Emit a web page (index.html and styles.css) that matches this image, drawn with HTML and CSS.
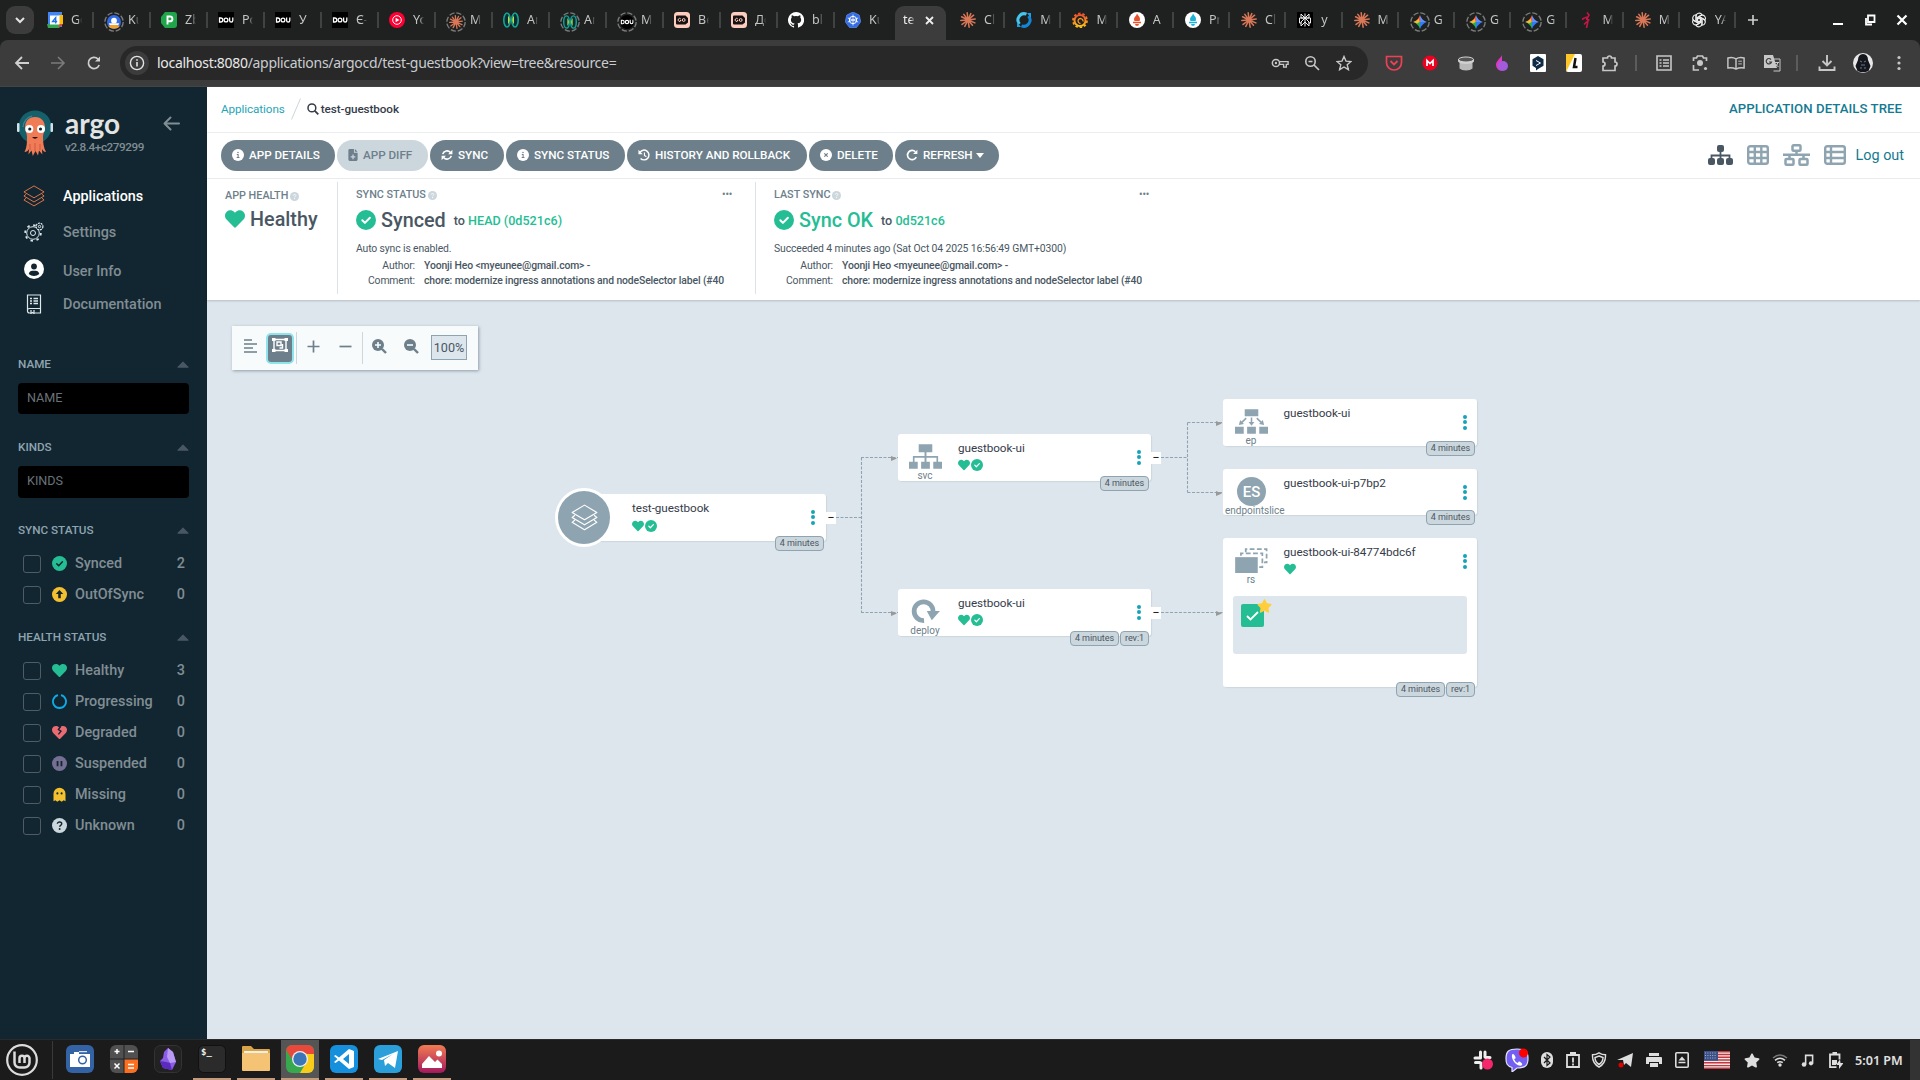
FILE: index.html
```html
<!DOCTYPE html>
<html lang="en">
<head>
<meta charset="utf-8">
<title>test-guestbook - Application Details Tree</title>
<link rel="stylesheet" href="styles.css">
</head>
<body>
<svg class="sprite" aria-hidden="true">
  <symbol id="heart" viewBox="0 0 512 512"><path fill="currentColor" d="M462.3 62.6C407.5 15.9 326 24.3 275.7 76.2L256 96.5l-19.7-20.3C186.1 24.3 104.5 15.9 49.7 62.6c-62.8 53.6-66.1 149.8-9.9 207.9l193.5 199.8c12.5 12.9 32.8 12.9 45.3 0l193.5-199.8c56.3-58.1 53-154.3-9.8-207.9z"/></symbol>
  <symbol id="check" viewBox="0 0 20 20"><circle cx="10" cy="10" r="10" fill="currentColor"/><path d="M6.300 10.300l2.600 2.600 5-5.200" fill="none" stroke="var(--cut,#fff)" stroke-width="2" stroke-linecap="round" stroke-linejoin="round"/></symbol>
  <symbol id="star" viewBox="0 0 576 512"><path fill="currentColor" d="M259.3 17.8L194 150.2 47.9 171.5c-26.2 3.8-36.7 36.1-17.7 54.6l105.7 103-25 145.5c-4.5 26.3 23.2 46 46.4 33.7L288 439.6l130.7 68.7c23.2 12.2 50.9-7.4 46.4-33.7l-25-145.5 105.7-103c19-18.5 8.5-50.8-17.7-54.6L382 150.2 316.7 17.8c-11.7-23.6-45.6-23.9-57.4 0z"/></symbol>
  <symbol id="info" viewBox="0 0 20 20"><circle cx="10" cy="10" r="10" fill="currentColor"/><path d="M8 9h2.2v5M7.8 14.2h4.6" fill="none" stroke="var(--cut,#6d7f8b)" stroke-width="1.7"/><circle cx="10" cy="5.8" r="1.3" fill="var(--cut,#6d7f8b)"/></symbol>
  <symbol id="help" viewBox="0 0 20 20"><circle cx="10" cy="10" r="10" fill="currentColor"/><path d="M7.2 7.8c0-3.3 5.8-3.1 5.8 0 0 2-2.8 2.1-2.8 4" fill="none" stroke="var(--cut,#fff)" stroke-width="1.9"/><circle cx="10.2" cy="14.6" r="1.3" fill="var(--cut,#fff)"/></symbol>
  <symbol id="up" viewBox="0 0 12 7"><path d="M6 .8L11.3 6.2H.7z" fill="currentColor" stroke="currentColor" stroke-linejoin="round"/></symbol>
  <symbol id="burst" viewBox="0 0 20 20"><g stroke="#d97757" stroke-width="1.9" stroke-linecap="round"><path d="M10 10L9 1M10 10l3.5-8M10 10l7-6M10 10l9-1.2M10 10l8.6 3.6M10 10l5.6 6.6M10 10l1.4 9M10 10l-4 8M10 10l-7.4 5.6M10 10L1 10.6M10 10L2 6M10 10L4.8 3"/></g></symbol>
  <symbol id="ring" viewBox="0 0 24 24"><circle cx="12" cy="12" r="11" fill="none" stroke="#7c7c7c" stroke-width="1.6" stroke-dasharray="6.4 2.24"/></symbol>
  <symbol id="gem" viewBox="0 0 20 20"><path d="M10 10V0q2.500 7.500 10 10z" fill="#6a8df0"/><path d="M10 10h10q-7.500 2.500-10 10z" fill="#2f7df6"/><path d="M10 10V0Q7.500 7.500 0 10z" fill="#ee5f4c"/><path d="M10 10v10Q7.500 12.500 0 10z" fill="#27a85a"/><path d="M1 10q5-1.500 7-4.500L9.500 10 6 12z" fill="#f5bd2c"/></symbol>
  <symbol id="dou" viewBox="0 0 16 16"><rect width="16" height="16"/><g fill="none" stroke="#fff" stroke-width="1.300"><path d="M1.500 6h1.300a2 2 0 0 1 0 4H1.500zM11.600 5.400v3a1.600 1.600 0 0 0 3.200 0v-3"/><circle cx="8" cy="8" r="1.900"/></g></symbol>
  <symbol id="anatomy" viewBox="0 0 16 16"><ellipse cx="4" cy="8" rx="3.200" ry="7" fill="#0d2e30" stroke="#12a59a" stroke-width="1.600"/><ellipse cx="12" cy="8" rx="3.200" ry="7" fill="#0d2e30" stroke="#12a59a" stroke-width="1.600"/><path d="M5 3.500q3.500 4.500 0 9zM11 3.500q-3.500 4.500 0 9z" fill="#b8e04a"/></symbol>
  <symbol id="go" viewBox="0 0 16 16"><rect width="16" height="16" rx="3.500" fill="#ffcdbf"/><path d="M3 3.500h8.500L14 6v4.500L11.500 12.500H3a1 1 0 0 1-1-1v-7a1 1 0 0 1 1-1z" fill="#181111"/><g fill="none" stroke="#ffcdbf" stroke-width="1"><path d="M6.800 7a1.500 1.500 0 1 0 .2 1.500H6"/><circle cx="9.700" cy="8" r="1.400"/></g></symbol>
  <symbol id="prom" viewBox="0 0 16 16"><circle cx="8" cy="8" r="8" fill="#fff"/><path d="M8 1.500c1 2 3 3.300 3 5.500 0 1.200-.5 2-.5 2H5.500S5 8.200 5 7c0-2 2.500-3 3-5.500zM4 9.700h8v1.500H4zM6 12h4l-.8 1.800H6.800z" fill="currentColor"/></symbol>
  <symbol id="layers" viewBox="0 0 24 24"><g fill="none" stroke="currentColor" stroke-linejoin="round"><path d="M12 1l11 6.500-11 6.500L1 7.500z"/><path d="M3.500 10L1 12l11 6.500L23 12l-2.500-2M3.500 14.200L1 16.300l11 6.500 11-6.500-2.500-2.100"/></g></symbol>
  <symbol id="boxes" viewBox="0 0 34 25"><g fill="currentColor"><path d="M10 0h14v8H10zM0 18h9v7H0zM12.500 18h9v7h-9zM25 18h9v7h-9z"/><path d="M16 7h2v12h-2zM4 12h26v7h-1.700v-5.300H5.700V19H4z"/></g></symbol>
  <symbol id="ep" viewBox="0 0 34 25"><g fill="currentColor"><path d="M10 0h14v7H10zM0 18h9v7H0zM12.500 18h9v7h-9zM25 18h9v7h-9z"/><path d="M17 17l-3-4h2.200V8.500h1.600V13H20zM4 16l1.300-5 1.400 1.500L11 8.500l1.100 1.200-4.200 4 1.400 1.500zM30 16l-1.300-5-1.400 1.500L23 8.500l-1.100 1.200 4.200 4-1.400 1.500z"/></g></symbol>
  <symbol id="deploy" viewBox="0 0 30 26"><path d="M13.500 22.500a9.800 9.800 0 1 1 9.300-9.500" fill="none" stroke="currentColor" stroke-width="5"/><path d="M16.300 12.500H30l-8.500 9.500z" fill="currentColor"/></symbol>
  <symbol id="rs" viewBox="0 0 34 26"><path d="M0 9.500h23.500V26H0z" fill="currentColor"/><g fill="none" stroke="currentColor" stroke-width="1.800"><path d="M6 8V5.600h22.300V20H25" stroke-dasharray="5 2.500"/><path d="M11 4.500V1.100h21.700V15H30" stroke-dasharray="5 2.500"/></g></symbol>
</svg>

<header class="browser">
  <div class="tabstrip">
    <button class="tab-search"><svg width="10" height="7" viewBox="0 0 10 7"><path d="M1 1l4 4 4-4" fill="none" stroke="#e3e3e3" stroke-width="2"/></svg></button>
    <div class="tabs tabs-left">
      <div class="tab"><span class="fav"><svg viewBox="0 0 16 16"><path d="M1 0h14v15H1z" fill="#4285f4"/><path d="M12 3h4v9h-4z" fill="#fbbc04"/><path d="M0 12h12v4H1z" fill="#34a853"/><path d="M12 12h4l-4 4z" fill="#ea4335"/><path d="M3 3.500h9.500v9H3z" fill="#fff"/><path d="M8.700 11.500v-6l-3.200 4h4.700" fill="none" stroke="#1a73e8" stroke-width="1.300"/></svg></span><span class="tt">Go</span></div>
      <div class="tab"><span class="fav ringed"><svg viewBox="0 0 16 16"><circle cx="8" cy="8" r="8" fill="#326ce5"/><path d="M1.500 12.500q6.500-4 13 0A8 8 0 0 1 1.500 12.500z" fill="#f0a22e"/><circle cx="8" cy="6.500" r="3.300" fill="#fff"/><path d="M2 9.500h12l-1 2H3z" fill="#fff"/></svg><svg class="rg"><use href="#ring"/></svg></span><span class="tt">Ku</span></div>
      <div class="tab"><span class="fav"><svg viewBox="0 0 16 16"><path d="M4 0h9a3 3 0 0 1 3 3v10a3 3 0 0 1-3 3H4l-4-5V5z" fill="#1fa54a"/><path d="M6.500 12.500v-8H9a2.300 2.300 0 0 1 0 4.800H6.500" fill="none" stroke="#fff" stroke-width="1.900"/></svg></span><span class="tt">Zb</span></div>
      <div class="tab"><span class="fav"><svg><use href="#dou"/></svg></span><span class="tt">Ро</span></div>
      <div class="tab"><span class="fav"><svg><use href="#dou"/></svg></span><span class="tt">У</span></div>
      <div class="tab"><span class="fav"><svg><use href="#dou"/></svg></span><span class="tt">Є-</span></div>
      <div class="tab"><span class="fav"><svg viewBox="0 0 16 16"><circle cx="8" cy="8" r="8" fill="#f03"/><circle cx="8" cy="8" r="4.300" fill="none" stroke="#fff"/><path d="M6.600 5.700L10.500 8l-3.900 2.300z" fill="#fff"/></svg></span><span class="tt">Yo</span></div>
      <div class="tab"><span class="fav ringed"><svg><use href="#burst"/></svg><svg class="rg"><use href="#ring"/></svg></span><span class="tt">M</span></div>
      <div class="tab"><span class="fav"><svg><use href="#anatomy"/></svg></span><span class="tt">An</span></div>
      <div class="tab"><span class="fav ringed"><svg><use href="#anatomy"/></svg><svg class="rg"><use href="#ring"/></svg></span><span class="tt">An</span></div>
      <div class="tab"><span class="fav ringed"><svg class="round"><use href="#dou"/></svg><svg class="rg"><use href="#ring"/></svg></span><span class="tt">M</span></div>
      <div class="tab"><span class="fav"><svg><use href="#go"/></svg></span><span class="tt">Be</span></div>
      <div class="tab"><span class="fav"><svg><use href="#go"/></svg></span><span class="tt">До</span></div>
      <div class="tab"><span class="fav"><svg viewBox="0 0 16 16"><path fill="#fff" d="M8 0a8 8 0 0 0-2.530 15.590c.4.070.55-.17.55-.38v-1.340c-2.230.480-2.700-1.070-2.700-1.070-.36-.920-.890-1.170-.890-1.170-.730-.5.050-.490.050-.490.810.060 1.230.830 1.230.830.720 1.230 1.880.870 2.340.670.070-.520.280-.880.510-1.080-1.780-.2-3.640-.890-3.640-3.950 0-.870.310-1.590.820-2.150-.080-.2-.360-1.020.080-2.120 0 0 .670-.210 2.200.820a7.600 7.600 0 0 1 4 0c1.530-1.040 2.200-.820 2.200-.820.440 1.100.160 1.920.080 2.120.510.560.820 1.270.820 2.150 0 3.070-1.870 3.750-3.650 3.950.290.250.540.730.540 1.480v2.200c0 .210.150.460.550.380A8 8 0 0 0 8 0z"/></svg></span><span class="tt">bl</span></div>
      <div class="tab"><span class="fav"><svg viewBox="0 0 16 16"><path d="M8 0l6.200 3 1.600 6.800L11.500 15.500h-7L.2 9.800 1.800 3z" fill="#326ce5" stroke="#6f9bf2" stroke-width=".6"/><circle cx="8" cy="8" r="3.700" fill="none" stroke="#fff"/><path d="M8 2.500v11M2.800 6l10.400 4M2.800 10l10.400-4" stroke="#fff" stroke-width=".8"/></svg></span><span class="tt">Ku</span></div>
    </div>
    <div class="active-cell"><div class="tab-active"><span class="tt">te</span><svg width="9" height="9" viewBox="0 0 9 9"><path d="M1 1l7 7M8 1L1 8" stroke="#eee" stroke-width="1.800"/></svg></div></div>
    <div class="tabs tabs-right">
      <div class="tab"><span class="fav"><svg><use href="#burst"/></svg></span><span class="tt">Cl</span></div>
      <div class="tab"><span class="fav"><svg viewBox="0 0 16 16"><g fill="none" stroke-width="3"><path d="M10.500 2.200A6.200 6.200 0 0 0 3.500 12" stroke="#45c5ec"/><path d="M5.500 13.800a6.200 6.200 0 0 0 7-9.800" stroke="#1287d8"/></g><path d="M1 10l4 5H1zM15 6l-4-5h4z" fill="#1f9ee0"/></svg></span><span class="tt">M</span></div>
      <div class="tab"><span class="fav"><svg viewBox="0 0 16 16"><defs><linearGradient id="graf" x2="0" y2="1"><stop stop-color="#f0502d"/><stop offset="1" stop-color="#fcc21c"/></linearGradient></defs><circle cx="8" cy="8.500" r="5.500" fill="none" stroke="url(#graf)" stroke-width="2"/><circle cx="8" cy="8.500" r="7" fill="none" stroke="url(#graf)" stroke-width="1.800" stroke-dasharray="2.500 1.900"/><path d="M11 9.500a2.500 2.500 0 1 0-2.500 2" fill="none" stroke="#f89a26" stroke-width="1.300"/></svg></span><span class="tt">M</span></div>
      <div class="tab"><span class="fav am"><svg><use href="#prom"/></svg></span><span class="tt">A</span></div>
      <div class="tab"><span class="fav pm"><svg><use href="#prom"/></svg></span><span class="tt">Pr</span></div>
      <div class="tab"><span class="fav"><svg><use href="#burst"/></svg></span><span class="tt">Cl</span></div>
      <div class="tab"><span class="fav"><svg viewBox="0 0 16 16"><rect width="16" height="16" fill="#000"/><path d="M8 1.500v13M4 2l4 4 4-4v4H4zM2.500 6h11v5h-2M2.500 6v5h2M8 6l-4 4v4l4-4 4 4v-4z" fill="none" stroke="#eee" stroke-width="1"/></svg></span><span class="tt">y</span></div>
      <div class="tab"><span class="fav"><svg><use href="#burst"/></svg></span><span class="tt">M</span></div>
      <div class="tab"><span class="fav ringed"><svg><use href="#gem"/></svg><svg class="rg"><use href="#ring"/></svg></span><span class="tt">G</span></div>
      <div class="tab"><span class="fav ringed"><svg><use href="#gem"/></svg><svg class="rg"><use href="#ring"/></svg></span><span class="tt">G</span></div>
      <div class="tab"><span class="fav ringed"><svg><use href="#gem"/></svg><svg class="rg"><use href="#ring"/></svg></span><span class="tt">G</span></div>
      <div class="tab"><span class="fav"><svg viewBox="0 0 16 16"><path d="M9 .5l2 2.500-2 3.500 1 2.500-1.500 7M9 5L5 6.500 4.500 8M8 7l3.500 1M9 9.500l-3 3" fill="none" stroke="#c41745" stroke-width="1.600"/></svg></span><span class="tt">M</span></div>
      <div class="tab"><span class="fav"><svg><use href="#burst"/></svg></span><span class="tt">M</span></div>
      <div class="tab"><span class="fav"><svg viewBox="0 0 16 16"><g fill="none" stroke="#eee" stroke-width="1.100"><path id="petal" d="M5 9.500V4.200a3.200 3.200 0 0 1 6-1.400L6.500 5.500v4.200"/><use href="#petal" transform="rotate(60 8 8)"/><use href="#petal" transform="rotate(120 8 8)"/><use href="#petal" transform="rotate(180 8 8)"/><use href="#petal" transform="rotate(240 8 8)"/><use href="#petal" transform="rotate(300 8 8)"/></g></svg></span><span class="tt">YA</span></div>
    </div>
    <svg class="plus" width="12" height="12" viewBox="0 0 12 12"><path d="M6 1v10M1 6h10" stroke="#d0d0d0" stroke-width="1.600"/></svg>
    <div class="wincontrols">
      <svg viewBox="0 0 12 12"><path d="M1 10h10" stroke="#fff" stroke-width="2"/></svg>
      <svg viewBox="0 0 12 12"><path d="M4 1.500h6.500V8H4zM2 4v6.500h6" fill="none" stroke="#fff" stroke-width="1.800"/></svg>
      <svg viewBox="0 0 12 12"><path d="M1.500 1.500l9 9M10.500 1.500l-9 9" stroke="#fff" stroke-width="2.200"/></svg>
    </div>
  </div>
  <div class="toolbar">
    <div class="nav-buttons">
      <svg viewBox="0 0 16 16"><path d="M15 8H2.500M8 2L2 8l6 6" fill="none" stroke="#d0d0d0" stroke-width="1.800"/></svg>
      <svg viewBox="0 0 16 16"><path d="M1 8h12.500M8 2l6 6-6 6" fill="none" stroke="#7b7b7b" stroke-width="1.600"/></svg>
      <svg viewBox="0 0 16 16"><path d="M13.200 10A5.600 5.600 0 1 1 12 4l1.500 1.500" fill="none" stroke="#d0d0d0" stroke-width="1.700"/><path d="M14 1.500v5H9z" fill="#d0d0d0"/></svg>
    </div>
    <div class="omnibox">
      <span class="site"><svg width="16" height="16" viewBox="0 0 16 16"><circle cx="8" cy="8" r="6.600" fill="none" stroke="#e3e3e3" stroke-width="1.400"/><path d="M8 7v4.500M8 4.200v1.600" stroke="#e3e3e3" stroke-width="1.600"/></svg></span>
      <span class="url"><b>localhost:8080</b>/applications/argocd/test-guestbook?view=tree&amp;resource=</span>
      <span class="omni-icons">
        <svg viewBox="0 0 20 16"><circle cx="5.500" cy="8" r="4" fill="none" stroke="#c7c7c7" stroke-width="1.700"/><circle cx="5.500" cy="8" r="1.300" fill="#c7c7c7"/><path d="M9.500 6.500H19v3h-2v3h-3v-3H9.500" fill="none" stroke="#c7c7c7" stroke-width="1.500"/></svg>
        <svg viewBox="0 0 16 16"><circle cx="6.500" cy="6.500" r="4.700" fill="none" stroke="#c7c7c7" stroke-width="1.600"/><path d="M4.500 6.500h4M10 10l5 5" stroke="#c7c7c7" stroke-width="1.700"/></svg>
        <svg viewBox="0 0 16 16"><path d="M8 1.500l2 4.600 5 .4-3.800 3.300 1.200 4.900L8 12l-4.400 2.700 1.200-4.900L1 6.500l5-.4z" fill="none" stroke="#c7c7c7" stroke-width="1.400"/></svg>
      </span>
    </div>
    <div class="exts">
      <svg viewBox="0 0 18 18"><path d="M1.500 2.500h15v6a7.500 7.500 0 0 1-15 0z" fill="none" stroke="#ef4056" stroke-width="1.700"/><path d="M5.500 7L9 10.500 12.500 7" fill="none" stroke="#ef4056" stroke-width="1.800"/></svg>
      <svg viewBox="0 0 18 18"><circle cx="9" cy="9" r="7.500" fill="#f0001f"/><path d="M6 12V6.500l3 3 3-3V12" fill="none" stroke="#fff" stroke-width="1.700"/></svg>
      <svg viewBox="0 0 18 18"><path d="M2.500 8h13v6.500q-2 2-6.500 2t-6.500-2z" fill="#b9b9b9"/><path d="M1 5v2.500q2 2.500 8 2.500t8-2.500V5z" fill="#d0d0d0"/><ellipse cx="9" cy="5.500" rx="7.500" ry="2.500" fill="#555" stroke="#d6d6d6"/></svg>
      <svg viewBox="0 0 18 18"><path d="M9 1v16a6 6 0 0 1-6-6C3 7 7 5 9 1z" fill="#e137c5"/><circle cx="10" cy="12" r="5" fill="#a35bdc"/></svg>
      <svg viewBox="0 0 18 18"><rect x="1" width="16" height="18" rx="1" fill="#fff"/><path d="M9 2l5.500 3.200v6.600L9 15l-2 1.500V14l-3.500-2.200V5.200z" fill="#0f2b46"/><path d="M7 6.500l4.500 2.500L7 11.500" fill="none" stroke="#fff"/></svg>
      <svg viewBox="0 0 18 18"><rect x="1" width="16" height="18" rx="2" fill="#fff"/><path d="M1 18V0h9z" fill="#ffc629"/><path d="M10.500 4L9 13h3.500" fill="none" stroke="#111" stroke-width="2.500"/></svg>
      <svg viewBox="0 0 18 18"><path d="M2 4h4.500a2 2 0 0 1 4 0H14v4a2 2 0 0 1 0 4v4.500H2V12a2 2 0 0 0 0-4z" fill="none" stroke="#c7c7c7" stroke-width="1.700"/></svg>
    </div>
    <i class="vsep"></i>
    <div class="exts tools">
      <svg viewBox="0 0 18 18"><path d="M2 2h14v14H2z" fill="none" stroke="#c7c7c7" stroke-width="1.600"/><path d="M4.500 6h2M8 6h6M4.500 9h2M8 9h6M4.500 12h2M8 12h6" stroke="#c7c7c7" stroke-width="1.500"/></svg>
      <svg viewBox="0 0 18 18"><path d="M2.500 7V4h3l1-2h5l1 2h3v3M2.500 11v5H8" fill="none" stroke="#c7c7c7" stroke-width="1.700"/><circle cx="9" cy="9" r="3" fill="#c7c7c7"/><circle cx="14.500" cy="14.500" r="1.600" fill="#c7c7c7"/></svg>
      <svg viewBox="0 0 20 18"><path d="M10 4.500v11M1 3.500q5-1.500 9 1 4-2.500 9-1v11q-5-1-9 1.200-4-2.200-9-1.200z" fill="none" stroke="#c7c7c7" stroke-width="1.600"/><path d="M12.500 7h4M12.500 10h4" stroke="#c7c7c7"/></svg>
      <svg viewBox="0 0 18 18"><path d="M1 1h9l4 13H1z" fill="#c7c7c7"/><path d="M8 5.500A2.700 2.700 0 1 0 8.500 8H6" fill="none" stroke="#3c3c3c" stroke-width="1.200"/><path d="M11 5h6v12h-6.500" fill="none" stroke="#c7c7c7"/><path d="M11.500 8.500h4.500M15 8.500q-1 3-3 4.500M12.500 10l3 3" stroke="#c7c7c7" fill="none"/></svg>
    </div>
    <i class="vsep"></i>
    <div class="exts last">
      <svg viewBox="0 0 18 18"><path d="M9 1v10M4.500 7L9 11.500 13.500 7M1.500 12.500V16h15v-3.500" fill="none" stroke="#c7c7c7" stroke-width="1.900"/></svg>
      <svg class="avatar" viewBox="0 0 20 20"><circle cx="10" cy="10" r="10" fill="#e8e8ea"/><path d="M10 1q5 .5 5 6l2.500 6-2 5q-5.500 2.500-11 0l-2-5L5 7q0-5.500 5-6z" fill="#15171c"/><path d="M7 8l2 1M13 8l-2 1M8 12h4M7 15h2M11 15h2" stroke="#66789a"/></svg>
      <svg viewBox="0 0 18 18"><g fill="#c7c7c7"><circle cx="9" cy="3.500" r="1.600"/><circle cx="9" cy="9" r="1.600"/><circle cx="9" cy="14.500" r="1.600"/></g></svg>
    </div>
  </div>
</header>

<main class="app">
  <aside class="sidebar">
    <div class="brand">
      <svg class="octo" viewBox="0 0 36 46"><circle cx="18" cy="17" r="16.500" fill="#16606b"/><path d="M6 17A12 12 0 0 1 15 6" fill="none" stroke="#3b8994" stroke-width="1.200"/><rect x="0" y="13" width="2.500" height="9" rx="1" fill="#cfe3ea"/><rect x="33.500" y="13" width="2.500" height="9" rx="1" fill="#cfe3ea"/><path d="M18 7c6.500 0 10 4.500 10 10.500 0 4-2 5.500-2 9 0 6 .5 11 3 15.500-2 0-3-1-4-3l.3 5.500-3.300-4-1 5-2.500-4.500-2.700 5-1.300-5.500-3 4 .5-5.500c-1 2-2.500 3-4.500 3C10 37.500 10 32.500 10 26.500c0-3.500-2-5-2-9C8 11.500 11.500 7 18 7z" fill="#ef7b57"/><path d="M13 34v6M18 33v8M23 34v6" stroke="#d4583a" stroke-width="1"/><circle cx="12.300" cy="19" r="4" fill="#fff"/><circle cx="24" cy="19" r="4" fill="#fff"/><circle cx="12.800" cy="19" r="1.600" fill="#15252e"/><circle cx="23.500" cy="19" r="1.600" fill="#15252e"/><path d="M15 27q3 3.500 6 0z" fill="#2b1210"/></svg>
      <div class="brand-text"><span class="argo">argo</span><span class="ver">v2.8.4+c279299</span></div>
      <svg class="back" width="17" height="15" viewBox="0 0 17 15"><path d="M16 7.500H2M7.500 1.500l-6 6 6 6" fill="none" stroke="#818d94" stroke-width="2" stroke-linecap="round" stroke-linejoin="round"/></svg>
    </div>
    <nav class="menu">
      <a class="on"><svg width="24" height="24"><use href="#layers"/></svg>Applications</a>
      <a><svg width="20" height="20" viewBox="0 0 20 20"><g fill="none" stroke="#dfe8ec"><circle cx="9" cy="11" r="6.300"/><circle cx="9" cy="11" r="7.900" stroke-width="1.700" stroke-dasharray="2.500 3.700"/><circle cx="9" cy="11" r="2.500"/><circle cx="15.500" cy="4.500" r="3.400" fill="#112630" stroke-dasharray="2 .8" stroke-width="1.200"/><circle cx="15.500" cy="4.500" r="1.200"/></g></svg>Settings</a>
      <a class="user"><svg width="21" height="21" viewBox="0 0 20 20"><circle cx="10" cy="10" r="10" fill="#fff"/><circle cx="10" cy="7.500" r="2.900" fill="#112630"/><path d="M4.700 15q1-3.200 3.500-3.200h3.600q2.500 0 3.500 3.200-2.300 2-5.300 2t-5.300-2z" fill="#112630"/></svg>User Info</a>
      <a class="docs"><svg width="20" height="20" viewBox="0 0 20 20"><g fill="none" stroke="#dfe8ec" stroke-width="1.200"><path d="M3.500 1h13v18h-11q-2 0-2-2zM3.500 16q0-1.500 2-1.500h11M7 16v3.500l1.500-1 1.500 1V16"/><path d="M6 4.500h2M9.500 4.500H14M6 7h2M9.500 7H14M6 9.500h2M9.500 9.500H14" stroke-width="1.400"/></g></svg>Documentation</a>
    </nav>
    <section class="filter f-name"><h4>NAME<svg><use href="#up"/></svg></h4><div class="input">NAME</div></section>
    <section class="filter f-kinds"><h4>KINDS<svg><use href="#up"/></svg></h4><div class="input">KINDS</div></section>
    <section class="filter f-sync"><h4>SYNC STATUS<svg><use href="#up"/></svg></h4>
      <div class="row"><i></i><svg class="green"><use href="#check"/></svg><span>Synced</span><b>2</b></div>
      <div class="row"><i></i><svg viewBox="0 0 20 20"><circle cx="10" cy="10" r="10" fill="#f4c030"/><path d="M10 4l5 5.300h-3.300V15H8.300V9.300H5z" fill="#112630"/></svg><span>OutOfSync</span><b>0</b></div>
    </section>
    <section class="filter f-health"><h4>HEALTH STATUS<svg><use href="#up"/></svg></h4>
      <div class="row"><i></i><svg class="green"><use href="#heart"/></svg><span>Healthy</span><b>3</b></div>
      <div class="row"><i></i><svg viewBox="0 0 20 20"><path d="M12 1.500a8.700 8.700 0 1 1-4 0" fill="none" stroke="#0dadea" stroke-width="2.400"/></svg><span>Progressing</span><b>0</b></div>
      <div class="row"><i></i><svg class="red" viewBox="0 0 20 20"><use href="#heart"/><path d="M11.500 2l-3 4 3.500 2.300-3.500 4.200" fill="none" stroke="#112630" stroke-width="1.800"/></svg><span>Degraded</span><b>0</b></div>
      <div class="row"><i></i><svg viewBox="0 0 20 20"><circle cx="10" cy="10" r="10" fill="#766f94"/><path d="M7.400 6.500v7M12.600 6.500v7" stroke="#112630" stroke-width="2.400"/></svg><span>Suspended</span><b>0</b></div>
      <div class="row"><i></i><svg viewBox="0 0 20 20"><path d="M2 19V9a8 8 0 0 1 16 0v10l-2.500-1.300L13 19.700l-3-2-3 2-2.500-2z" fill="#f4c030"/><circle cx="7.200" cy="8.500" r="1.400" fill="#112630"/><circle cx="12.800" cy="8.500" r="1.400" fill="#112630"/></svg><span>Missing</span><b>0</b></div>
      <div class="row"><i></i><svg class="pale"><use href="#help"/></svg><span>Unknown</span><b>0</b></div>
    </section>
  </aside>

  <div class="content">
    <div class="crumbs">
      <a>Applications</a>
      <svg class="slash" width="10" height="22" viewBox="0 0 10 22"><path d="M.5 21.500L9.500.5" stroke="#ccd6dd"/></svg>
      <svg class="mag" width="12" height="12" viewBox="0 0 12 12"><circle cx="4.900" cy="4.900" r="3.900" fill="none" stroke="#363c4a" stroke-width="1.500"/><path d="M7.800 7.800l3.500 3.500" stroke="#363c4a" stroke-width="1.800"/></svg>
      <b>test-guestbook</b>
      <span class="page-title">APPLICATION DETAILS TREE</span>
    </div>
    <div class="actions">
      <button class="w114"><svg><use href="#info"/></svg>APP DETAILS</button>
      <button class="w91 off"><svg class="file" viewBox="0 0 10 13"><path d="M1.500 0H6v4h4v7.500q0 1.500-1.500 1.500h-7Q0 13 0 11.500v-10Q0 0 1.500 0zM7 0l3 3H7z" fill="#6d7f8b"/><path d="M5 6v5M2.500 8.500h5" stroke="#ccd6dd" stroke-width="1.300"/></svg>APP DIFF</button>
      <button class="w74"><svg viewBox="0 0 14 14"><path d="M2 6a5.200 5.200 0 0 1 9-2M12 8a5.200 5.200 0 0 1-9 2" fill="none" stroke="#fff" stroke-width="1.900"/><path d="M13.300 1v5h-5zM.7 13V8h5z" fill="#fff"/></svg>SYNC</button>
      <button class="w119"><svg><use href="#info"/></svg>SYNC STATUS</button>
      <button class="w180"><svg viewBox="0 0 14 14"><path d="M2.200 4A5.700 5.700 0 1 1 3 11" fill="none" stroke="#fff" stroke-width="1.700"/><path d="M.5 1v5h5z" fill="#fff"/><path d="M7.500 4v3.500l2.300 1.500" fill="none" stroke="#fff" stroke-width="1.300"/></svg>HISTORY AND ROLLBACK</button>
      <button class="w85"><svg viewBox="0 0 20 20"><circle cx="10" cy="10" r="10" fill="#fff"/><path d="M7.200 7.200l5.600 5.600M12.800 7.200l-5.600 5.600" stroke="#6d7f8b" stroke-width="2"/></svg>DELETE</button>
      <button class="w104"><svg viewBox="0 0 14 14"><path d="M12 9.500A5.400 5.400 0 1 1 11 3.200" fill="none" stroke="#fff" stroke-width="1.900"/><path d="M13.300.8v5h-5z" fill="#fff"/></svg>REFRESH<svg class="caret" viewBox="0 0 8 5"><path d="M0 0h8L4 5z" fill="#fff"/></svg></button>
      <div class="views">
        <svg width="25" height="20" viewBox="0 0 25 20"><g fill="#495763"><rect x="9" width="7" height="7" rx="2"/><rect y="13" width="7" height="7" rx="2"/><rect x="9" y="13" width="7" height="7" rx="2"/><rect x="18" y="13" width="7" height="7" rx="2"/></g><path d="M12.500 6v8M3.500 14v-3.500h18V14" fill="none" stroke="#495763" stroke-width="1.800"/></svg>
        <svg width="22" height="20" viewBox="0 0 22 20"><g fill="none" stroke="#8fa4b1" stroke-width="2.400"><rect x="1.200" y="1.200" width="19.600" height="17.600" rx="2"/><path d="M1 7h20M1 13h20M7.800 1v18M14.300 1v18"/></g></svg>
        <svg width="27" height="22" viewBox="0 0 27 22"><g fill="none" stroke="#8fa4b1" stroke-width="2.500"><rect x="9.500" y="1.300" width="8" height="5.400" rx="1"/><rect x="2.500" y="15" width="8" height="5.700" rx="1"/><rect x="16.500" y="15" width="8" height="5.700" rx="1"/><path d="M0 10.800h27M13.500 7v4M6.500 11v4M20.500 11v4"/></g></svg>
        <svg width="22" height="20" viewBox="0 0 22 20"><g fill="none" stroke="#8fa4b1" stroke-width="2.400"><rect x="1.200" y="1.200" width="19.600" height="17.600" rx="2"/><path d="M1 7h20M1 13h20M7 1v18"/></g></svg>
        <a>Log out</a>
      </div>
    </div>
    <div class="status">
      <div class="health"><h5>APP HEALTH<svg><use href="#help"/></svg></h5><div class="big"><svg class="green"><use href="#heart"/></svg>Healthy</div></div>
      <div class="op">
        <h5>SYNC STATUS<svg><use href="#help"/></svg><em>•••</em></h5>
        <div class="big"><svg class="green"><use href="#check"/></svg>Synced<span class="to">to <a>HEAD (0d521c6)</a></span></div>
        <p class="note">Auto sync is enabled.</p>
        <dl><dt>Author:</dt><dd>Yoonji Heo &lt;myeunee@gmail.com&gt; -</dd><dt>Comment:</dt><dd>chore: modernize ingress annotations and nodeSelector label (#40</dd></dl>
      </div>
      <div class="op">
        <h5>LAST SYNC<svg><use href="#help"/></svg><em>•••</em></h5>
        <div class="big ok"><svg class="green"><use href="#check"/></svg>Sync OK<span class="to">to <a>0d521c6</a></span></div>
        <p class="note">Succeeded 4 minutes ago (Sat Oct 04 2025 16:56:49 GMT+0300)</p>
        <dl><dt>Author:</dt><dd>Yoonji Heo &lt;myeunee@gmail.com&gt; -</dd><dt>Comment:</dt><dd>chore: modernize ingress annotations and nodeSelector label (#40</dd></dl>
      </div>
    </div>

    <div class="graph">
      <div class="graphbar">
        <span class="g1"><svg width="13" height="14" viewBox="0 0 13 14"><path d="M0 1h8M0 5h13M0 9h9M0 13h13" stroke="#6d7f8b" stroke-width="1.600"/></svg></span>
        <span class="g2"><svg width="16" height="14" viewBox="0 0 16 14"><g fill="none" stroke="#fff" stroke-width="1.400"><path d="M2 1.500h12v11H2z"/><path d="M5 4h4v3.500H5zM10.500 6v4H7.500"/></g><path d="M0 0h3.500v3H0zM12.500 0H16v3h-3.500zM0 11h3.500v3H0zM12.500 11H16v3h-3.500z" fill="#fff"/></svg></span>
        <i></i>
        <span class="g3"><svg width="13" height="13" viewBox="0 0 13 13"><path d="M6.500.5v12M.5 6.500h12" stroke="#6d7f8b" stroke-width="1.700"/></svg></span>
        <span class="g3"><svg width="13" height="13" viewBox="0 0 13 13"><path d="M.5 6.500h12" stroke="#6d7f8b" stroke-width="1.700"/></svg></span>
        <i></i>
        <span class="g3"><svg width="15" height="15" viewBox="0 0 15 15"><circle cx="6" cy="6" r="6" fill="#6d7f8b"/><path d="M10 10l4 4" stroke="#6d7f8b" stroke-width="2.400"/><path d="M6 3v6M3 6h6" stroke="#f7fbfc" stroke-width="1.600"/></svg></span>
        <span class="g3"><svg width="15" height="15" viewBox="0 0 15 15"><circle cx="6" cy="6" r="6" fill="#6d7f8b"/><path d="M10 10l4 4" stroke="#6d7f8b" stroke-width="2.400"/><path d="M3 6h6" stroke="#f7fbfc" stroke-width="1.600"/></svg></span>
        <span class="pct">100%</span>
      </div>

      <svg class="edges" viewBox="207 300 1713 739">
        <g fill="none" stroke="#8fa4b1" stroke-dasharray="3 1.500" stroke-width="1.100">
          <path d="M836 517.500h25M861.500 457.500v155M861 457.500h37M861 612.500h37M1161 457.500h26.500M1187.500 422.500v70M1187.500 422.500h36M1187.500 492.500h36M1161 612.500h62"/>
        </g>
        <path fill="#999" d="M891 456l6 2.500-6 2.500zM891 611l6 2.500-6 2.500zM1216 421l6 2.500-6 2.500zM1216 491l6 2.500-6 2.500zM1216 611l6 2.500-6 2.500z"/>
      </svg>

      <div class="node root"><span class="disc"><svg width="27" height="27"><use href="#layers"/></svg></span><div class="label">test-guestbook<span><svg><use href="#heart"/></svg><svg><use href="#check"/></svg></span></div><span class="kebab"><i></i><i></i><i></i></span><span class="fold">−</span><div class="tags"><span>4 minutes</span></div></div>
      <div class="node n-svc"><div class="kind"><svg class="k33"><use href="#boxes"/></svg>svc</div><div class="label">guestbook-ui<span><svg><use href="#heart"/></svg><svg><use href="#check"/></svg></span></div><span class="kebab"><i></i><i></i><i></i></span><span class="fold">−</span><div class="tags"><span>4 minutes</span></div></div>
      <div class="node n-dep"><div class="kind"><svg class="k33"><use href="#deploy"/></svg>deploy</div><div class="label">guestbook-ui<span><svg><use href="#heart"/></svg><svg><use href="#check"/></svg></span></div><span class="kebab"><i></i><i></i><i></i></span><span class="fold">−</span><div class="tags"><span>4 minutes</span><span>rev:1</span></div></div>
      <div class="node n-ep"><div class="kind"><svg class="k33"><use href="#ep"/></svg>ep</div><div class="label">guestbook-ui</div><span class="kebab"><i></i><i></i><i></i></span><div class="tags"><span>4 minutes</span></div></div>
      <div class="node n-es"><div class="kind es"><b>ES</b>endpointslice</div><div class="label">guestbook-ui-p7bp2</div><span class="kebab"><i></i><i></i><i></i></span><div class="tags"><span>4 minutes</span></div></div>
      <div class="node n-rs"><div class="kind"><svg class="k33"><use href="#rs"/></svg>rs</div><div class="label">guestbook-ui-84774bdc6f<span><svg><use href="#heart"/></svg></span></div><span class="kebab"><i></i><i></i><i></i></span><div class="pods"><span class="pod"><svg width="13" height="10" viewBox="0 0 13 10"><path d="M1 5l3.500 3.500L12 1" fill="none" stroke="#fff" stroke-width="1.800"/></svg><svg class="fav-star" width="15" height="14"><use href="#star"/></svg></span></div><div class="tags"><span>4 minutes</span><span>rev:1</span></div></div>
    </div>
  </div>
</main>

<footer class="panel">
  <span class="mint"><svg width="32" height="32" viewBox="0 0 32 32"><circle cx="16" cy="16" r="14.800" fill="none" stroke="#dcdcdc" stroke-width="2.200"/><path d="M8.500 7.500v11a5 5 0 0 0 5 5h5a5 5 0 0 0 5-5v-4.200a2.500 2.500 0 0 0-5 0V19M18.500 14.300a2.500 2.500 0 0 0-5 0V19" fill="none" stroke="#dcdcdc" stroke-width="2.500"/></svg></span>
  <i class="psep"></i>
  <div class="launch">
    <span><svg viewBox="0 0 28 28"><rect width="28" height="28" rx="6" fill="#3463a5"/><path d="M4 9h4V7h5v2h11v13H4z" fill="#fff"/><circle cx="16.500" cy="15" r="3.800" fill="#fff" stroke="#3463a5" stroke-width="1.500"/><path d="M13 6.700h8" stroke="#fff"/></svg></span>
    <span><svg viewBox="0 0 28 28"><rect width="28" height="28" rx="6" fill="#505050"/><path d="M14 14h14v8a6 6 0 0 1-6 6h-8z" fill="#fa7020"/><path d="M14 0v28M0 14h28" stroke="#222"/><path d="M7 4v5M4.500 6.500h5M18 6.500h6M4.500 18.500l5 5M9.500 18.500l-5 5M18 19.500h6M18 23h6" stroke="#fff" stroke-width="1.500"/></svg></span>
    <span><svg viewBox="0 0 28 28"><rect x=".5" y=".5" width="27" height="27" rx="6" fill="#222" stroke="#333"/><path d="M14 3l5 4 3 10-4 8-9-2-3-7 3-3 1-6z" fill="#8a5ce8"/><path d="M14 3l-1 9 3 6 6-1-3-10z" fill="#b99bf5"/><path d="M9 23l-3-7 6 1 4 1 2 7z" fill="#5b2bbd"/></svg></span>
    <span class="run"><svg viewBox="0 0 28 28"><rect x=".5" y=".5" width="27" height="27" rx="5" fill="#2b2b2b" stroke="#111"/><text x="3" y="10" class="prompt">$_</text></svg></span>
    <span class="run"><svg viewBox="0 0 28 28"><path d="M0 2q0-1 1-1h8l3 3h15q1 0 1 1v7H0z" fill="#d9a348"/><path d="M2 6h24v3H2z" fill="#f3efe6"/><path d="M0 8h28v17q0 1-1 1H1q-1 0-1-1z" fill="#f4c374"/></svg></span>
    <span class="run cur"><svg viewBox="0 0 28 28"><defs><clipPath id="cr"><rect width="28" height="28" rx="6"/></clipPath></defs><g clip-path="url(#cr)"><path d="M0 0h28v28H0z" fill="#37a84e"/><path d="M0 0h28v10H14l-6 7L0 5z" fill="#e8493a"/><path d="M14 9h14v19H14l6-10z" fill="#f8cc18"/></g><circle cx="14" cy="14" r="8" fill="#eee"/><circle cx="14" cy="14" r="6.700" fill="#3a76b8"/></svg></span>
    <span class="run"><svg viewBox="0 0 28 28"><rect width="28" height="28" rx="6" fill="#1690dc"/><path d="M19 4l5 2v16l-5 2L9 15.500 5.500 18 4 17l3.500-3L4 11l1.500-1L9 12.500zM19 9l-6 5 6 5z" fill="#fff" fill-rule="evenodd"/></svg></span>
    <span class="run"><svg viewBox="0 0 28 28"><rect width="28" height="28" rx="6" fill="#2b9fd9"/><path d="M4 14L24 6l-3 17-7-5-3 3-1-6 9-6-11 6z" fill="#fff"/></svg></span>
    <span class="run"><svg viewBox="0 0 28 28"><defs><linearGradient id="pix" x2="0" y2="1"><stop stop-color="#f27b52"/><stop offset="1" stop-color="#a3195f"/></linearGradient></defs><rect width="28" height="28" rx="6" fill="url(#pix)"/><path d="M4 23v-4l7-8 6 6 2.500-2.500L24 19v4z" fill="#fff"/><circle cx="21" cy="8.500" r="3" fill="#fff"/></svg></span>
  </div>
  <div class="tray">
    <svg class="t-slack" viewBox="0 0 20 20"><path d="M7.500 2v6M12 2v5M2 8h4M2.500 12.500H7M13 7.500h4M8 13v5" stroke="#eee" stroke-width="3" stroke-linecap="round"/><circle cx="14.500" cy="14" r="5.500" fill="#f5276c"/></svg>
    <svg class="t-viber" viewBox="0 0 24 24"><path d="M12 1c8 0 11 2 11 9.500S20 20 12 20l-5 4v-4.500C2 18 1 15.500 1 10.500 1 3 4 1 12 1z" fill="#7360f2" stroke="#e6e2ff" stroke-width="1.200"/><path d="M7 6.500q1.500-1.500 3 1.500t-1 3q1 3 4 4 .5-2.500 3-.5t0 3.300C11 18 6 11.500 7 6.500z" fill="#fff"/><circle cx="18.500" cy="5" r="4.500" fill="#f00"/></svg>
    <svg class="t-bt" viewBox="0 0 12 16"><rect width="12" height="16" rx="6" fill="#dedede"/><path d="M3 5l6 6-3 2.500v-11L9 5l-6 6" fill="none" stroke="#1b1b1b" stroke-width="1.200"/></svg>
    <svg class="t-clip" viewBox="0 0 14 16"><path d="M1 3h12v12H1z" fill="none" stroke="#dedede" stroke-width="1.800"/><path d="M4 0h6v4H4z" fill="#dedede"/><path d="M7 5.500v5M7 11.500v2" stroke="#dedede" stroke-width="1.800"/></svg>
    <svg class="t-shield" viewBox="0 0 16 16"><path d="M8 .8q3 2 6.500 2Q15 11 8 15.200 1 11 1.500 2.800 5 2.800 8 .8z" fill="none" stroke="#dedede" stroke-width="1.400"/><path d="M8 4l4 1.500Q12 10 8 12.500 4 10 4 5.500z" fill="none" stroke="#dedede" stroke-width="1.500"/></svg>
    <svg class="t-tg" viewBox="0 0 16 16"><path d="M0 8l16-7-2 14-5-4-2 2-1-5z" fill="#dedede"/><circle cx="4" cy="13" r="2.500" fill="#e00000"/></svg>
    <svg class="t-print" viewBox="0 0 16 14"><path d="M3 0h10v3H3zM1 4h14q1 0 1 1v6h-3V9H3v2H0V5q0-1 1-1zM4 10h8v4H4z" fill="#dedede"/></svg>
    <svg class="t-eject" viewBox="0 0 14 16"><rect x=".8" y=".8" width="12.400" height="14.400" rx="1" fill="none" stroke="#dedede" stroke-width="1.600"/><path d="M7 4.500l3.500 4h-7zM3.500 9.700h7v1.500h-7z" fill="#dedede"/></svg>
    <svg class="t-flag" viewBox="0 0 26 18"><path d="M0 0h26v18H0z" fill="#f3e9e9"/><path d="M0 .7h26M0 3.500h26M0 6.300h26M0 9h26M0 11.800h26M0 14.600h26M0 17.300h26" stroke="#c3383f" stroke-width="1.400"/><path d="M0 0h14v9.700H0z" fill="#3c5088"/><path d="M1 2h12M1 4.500h12M1 7h12" stroke="#a9b4d0" stroke-dasharray="1 1.400"/></svg>
    <svg class="t-star"><use href="#star"/></svg>
    <svg class="t-wifi" viewBox="0 0 16 14"><g fill="none" stroke="#dedede" stroke-width="1.600"><path d="M1 5q7-6 14 0" stroke="#777"/><path d="M3 7.300q5-4 10 0M5.200 9.700q2.800-2 5.600 0"/></g><circle cx="8" cy="12" r="1.700" fill="#dedede"/></svg>
    <svg class="t-music" viewBox="0 0 14 14"><path d="M5 11V1.500h7.500V10" fill="none" stroke="#dedede" stroke-width="1.700"/><circle cx="3.300" cy="11.300" r="2.500" fill="#dedede"/><circle cx="10.800" cy="10" r="2.300" fill="#dedede"/></svg>
    <svg class="t-bat" viewBox="0 0 14 17"><path d="M7.500 15.200H1V2.500h9.500v5" fill="none" stroke="#dedede" stroke-width="1.800"/><path d="M3.500 0H8v3H3.500zM3 8h5v5H3zM11 7.500l-4 5.500h3v4l4.500-6h-3z" fill="#dedede"/></svg>
    <time>5:01 PM</time>
  </div>
  <i class="desk"></i>
</footer>
</body>
</html>
```
FILE: styles.css
```css
* { box-sizing: border-box; }
body { margin: 0; width: 1920px; height: 1080px; overflow: hidden; font-family: Roboto, "Liberation Sans", sans-serif; background: #dee6ed; display: flex; flex-direction: column; }
h4, h5, p, dl, dd { margin: 0; }
svg { display: block; flex: none; }
button { font: inherit; border: 0; padding: 0; }
.sprite { position: absolute; width: 0; height: 0; }

/* Browser frame */
.browser { height: 87px; flex: none; background: #1f2020; font-family: "Noto Sans", "Open Sans", sans-serif; }
.tabstrip { height: 40px; display: flex; align-items: center; }
.tab-search { width: 28px; height: 28px; margin: 0 3px 0 6px; border-radius: 9px; background: #3c3c3c; display: flex; align-items: center; justify-content: center; }
.tabs { display: flex; }
.tabs-left { width: 855px; }
.tabs-right { width: 787px; }
.tab { flex: 1; min-width: 0; height: 16px; display: flex; align-items: center; border-right: 2px solid #414242; padding-left: 11px; }
.tabs-left .tab { padding-left: 10px; }
.tabs-left .tab:last-child { border-color: transparent; }
.fav { width: 16px; height: 16px; flex: none; display: grid; place-items: center; }
.fav svg { width: 16px; height: 16px; grid-area: 1 / 1; }
.ringed svg { width: 14px; height: 14px; }
.fav .rg { width: 20px; height: 20px; overflow: visible; }
.round { border-radius: 50%; }
.am { color: #e6522c; }
.pm { color: #1fb0d8; }
.tt { font-size: 12.500px; line-height: 20px; color: #c4c4c4; margin-left: 8px; width: 11px; overflow: hidden; white-space: nowrap; mask-image: linear-gradient(90deg, #000 60%, transparent); }
.active-cell { width: 57px; height: 34px; align-self: flex-end; padding: 0 3px; }
.tab-active { height: 34px; background: #3c3c3c; border-radius: 9px 9px 0 0; display: flex; align-items: center; padding-bottom: 6px; }
.tab-active .tt { width: 12px; color: #eee; margin-right: 10px; }
.plus { margin-left: 11px; }
.wincontrols { margin-left: auto; display: flex; gap: 20px; margin-right: 12px; }
.wincontrols svg { width: 12px; height: 12px; }
.toolbar { height: 47px; background: #3c3c3c; border-radius: 8px 8px 0 0; display: flex; align-items: center; border-bottom: 1px solid #444; }
.nav-buttons { display: flex; gap: 20px; padding-left: 14px; width: 120px; }
.nav-buttons svg { width: 16px; height: 16px; }
.omnibox { width: 1248px; height: 34px; border-radius: 17px; background: #282828; display: flex; align-items: center; padding-left: 5px; }
.site { width: 24px; height: 24px; border-radius: 50%; background: #3c3c3c; display: grid; place-items: center; }
.url { font-size: 14px; color: #c9cdd1; margin-left: 8px; white-space: nowrap; letter-spacing: -0.305px; padding-bottom: 1px; }
.url b { font-weight: 400; color: #e8e8e8; }
.omni-icons { margin-left: auto; display: flex; gap: 16px; margin-right: 16px; }
.omni-icons svg { width: 16px; height: 16px; }
.omni-icons svg:first-child { width: 18px; margin-right: -1px; }
.exts { display: flex; margin-left: 8px; }
.exts svg { width: 18px; height: 18px; margin: 0 9px; }
.vsep { width: 2px; height: 16px; background: #5c5c5c; margin-left: 7px; }
.vsep + .exts { margin-left: 9px; }
.tools + .vsep { margin-left: 6px; }
.exts.last { margin-left: 11px !important; }
.exts.last .avatar { width: 20px; height: 20px; margin: -1px 8px; }

/* Sidebar */
.app { height: 952px; flex: none; display: flex; }
.sidebar { width: 207px; flex: none; background: #112630; --cut: #112630; color: #818d94; font-weight: 500; }
.brand { height: 91px; padding: 23px 0 0 17px; display: flex; }
.octo { width: 36px; height: 46px; }
.brand-text { display: flex; flex-direction: column; margin-left: 12px; width: 98px; }
.argo { font: 700 28px/28px Lato, sans-serif; color: #e2e4e4; margin-top: -1px; height: 27px; }
.ver { font-size: 11.700px; line-height: 14px; margin-top: 4px; letter-spacing: -.4px; }
.back { margin-top: 6px; }
.menu { font-size: 14.400px; }
.menu a { height: 36px; display: flex; align-items: center; }
.menu a.user { height: 41px; padding-top: 2px; }
.menu a.user svg { margin-bottom: 6px; }
.menu a.docs { height: 26px; }
.menu svg { width: 22px; height: 20px; margin: 0 18px 0 23px; }
.menu .on { color: #fff; }
.menu .on svg { color: #ef7b4d; height: 22px; }
.filter { padding: 0 18px; }
.f-name { margin-top: 37px; }
.f-kinds { margin-top: 23px; }
.f-sync { margin-top: 22px; }
.f-health { margin-top: 17px; }
.filter h4 { font-size: 11.700px; font-weight: 500; line-height: 20px; height: 20px; display: flex; justify-content: space-between; align-items: center; color: #8fa4b1; }
.filter h4 svg { width: 12px; height: 7px; color: #495763; }
.input { margin-top: 9px; height: 31px; border-radius: 4px; background: #000; color: #6a7379; font-size: 12.600px; font-weight: 400; line-height: 29px; padding-left: 9px; }
.f-kinds .input { height: 32px; }
.row { height: 31px; display: flex; align-items: center; font-size: 14.400px; padding: 0 4px 0 5px; }
.filter h4 + .row { margin-top: 8px; }
.row i { width: 18px; height: 18px; border: 1px solid #4f5c64; border-radius: 3px; margin-top: 1px; }
.row svg { width: 15px; height: 15px; margin: 0 8px 0 11px; }
.row b { font-weight: 500; margin-left: auto; }
.green { color: #25bd94; }
.red { color: #ec6a72; }
.pale { color: #ccd6dd; }

/* Header rows */
.content { width: 1713px; display: flex; flex-direction: column; }
.crumbs { height: 46px; flex: none; background: #fff; border-bottom: 1px solid #eceeef; display: flex; align-items: center; padding: 0 18px 2px 14px; font-size: 11.700px; letter-spacing: -.08px; }
.crumbs a { color: #1fa5b5; }
.crumbs b { font-weight: 500; color: #363c4a; }
.slash { margin: 0 6px; }
.mag { margin-right: 2px; }
.page-title { margin-left: auto; font-weight: 500; font-size: 13.200px; letter-spacing: .05px; color: #137a91; }
.actions { height: 46px; flex: none; background: #fff; border-bottom: 1px solid #eceeef; display: flex; align-items: center; padding: 0 16px 0 14px; gap: 2px; }
.actions button { height: 31px; border-radius: 16px; background: #6d7f8b; color: #fff; font-size: 11.700px; font-weight: 500; display: flex; align-items: center; padding: 0 0 1px 11px; white-space: nowrap; letter-spacing: -.02px; }
.actions button svg { width: 12px; height: 12px; margin-right: 5px; }
.actions .off { background: #ccd6dd; color: #6d7f8b; }
.actions button .file { width: 10px; margin-right: 5px; }
.actions button .caret { width: 8px; height: 5px; margin: 0 0 0 3px; }
.w114 { width: 114px; } .w91 { width: 91px; } .w74 { width: 74px; } .w119 { width: 119px; } .w180 { width: 180px; } .w85 { width: 84px; } .w104 { width: 104px; }
.views { margin-left: auto; display: flex; align-items: center; }
.views svg { margin-right: 14px; margin-top: -1px; }
.views svg:nth-child(4) { margin-right: 10px; }
.views a { font-size: 14.400px; color: #137a91; }

/* Status panel */
.status { height: 121px; flex: none; background: #fff; display: flex; padding: 3px 0 6px; box-shadow: 0 1px 2px rgba(0,0,0,.18); color: #495763; position: relative; z-index: 1; }
.status h5 { font-size: 10.800px; font-weight: 500; line-height: 16px; color: #6d7f8b; display: flex; align-items: center; }
.status h5 svg { width: 9px; height: 9px; margin-left: 2px; color: #ccd6dd; }
.status h5 em { font-style: normal; font-size: 10px; margin-left: auto; letter-spacing: -.2px; }
.health { width: 131px; padding: 6px 0 0 18px; border-right: 1px solid #dce3e8; }
.op { width: 418px; padding: 5px 23px 0 18px; border-right: 1px solid #dce3e8; }
.op:last-child { border: 0; padding-right: 25px; }
.big { font-size: 19.800px; font-weight: 500; display: flex; align-items: center; height: 30px; margin-top: 2px; }
.health .big { margin-top: 0; }
.big svg { width: 20px; height: 20px; margin-right: 5px; }
.to { font-size: 12.600px; margin-left: 8px; }
.to a, .ok { color: #25bd94; }
.ok .to { color: #495763; }
.note { font-size: 10.400px; line-height: 14px; margin-top: 7px; letter-spacing: -.13px; }
dl { display: grid; grid-template-columns: 59px 1fr; column-gap: 9px; font-size: 10.400px; letter-spacing: -.13px; line-height: 15px; margin-top: 2px; white-space: nowrap; }
dt { text-align: right; }
dd { font-weight: 500; }

/* Graph canvas: nodes are placed at their layout coordinates */
.graph { position: relative; flex: 1; background: #dee6ed; padding: 26px 0 0 25px; }
.graphbar { width: 246px; height: 44px; background: #f7fbfc; box-shadow: 1px 1px 3px rgba(90,110,125,.6); display: flex; align-items: center; padding-left: 7px; }
.graphbar span { display: grid; place-items: center; height: 28px; padding-bottom: 4px; }
.g1 { width: 22px; margin-right: 3px; }
.graphbar .g2 { width: 28px; height: 31px; padding-bottom: 7px; background: #6d7f8b; border: 2px solid #8fe3ea; border-radius: 5px; margin-left: 2px; }
.graphbar i { width: 1px; height: 32px; background: #ccd6dd; }
.graphbar .g2 + i { margin-left: 2px; }
.g3 { width: 32.500px; }
.graphbar .pct { width: 36px; height: 25px; padding: 0; border: 1px solid #8fa4b1; background: #dee6ed; color: #495763; font-size: 12.600px; margin: -2px 0 0 3px; }
.edges { position: absolute; left: 0; top: 0; width: 1713px; height: 739px; }
.node { position: absolute; height: 47px; width: 253px; background: #fff; border-radius: 3px; box-shadow: 1px 1px 1px #ccd6dd; }
.root { left: 377px; top: 194px; width: 242px; }
.n-svc { left: 691px; top: 134px; }
.n-dep { left: 691px; top: 289px; }
.n-ep { left: 1016px; top: 99px; width: 254px; }
.n-es { left: 1016px; top: 169px; width: 254px; height: 46px; }
.n-rs { left: 1016px; top: 238px; width: 254px; height: 149px; }
.disc { position: absolute; left: -29px; top: -6px; width: 58px; height: 59px; border-radius: 50%; background: #8fa4b1; border: 3px solid #fff; color: #fff; display: grid; place-items: center; }
.kind { position: absolute; left: 0; top: 10px; width: 56px; display: flex; flex-direction: column; align-items: center; font-size: 10px; line-height: 13px; color: #6d7f8b; }
.n-svc .kind, .n-dep .kind { left: -1px; }
.k33 { width: 33px; height: 25px; color: #8fa4b1; }
.kind.es { top: 8px; }
.kind b { width: 29px; height: 29px; border-radius: 50%; background: #8fa4b1; color: #fff; font-size: 15px; font-weight: 500; line-height: 30px; text-align: center; margin-bottom: -2px; }
.kind.es { left: 2px; width: 58px; align-items: flex-start; }
.kind.es b { margin-left: 12px; }
.label { position: absolute; left: 60px; top: 6px; font-size: 11.700px; line-height: 16px; color: #363c4a; white-space: nowrap; letter-spacing: -.06px; }
.n-ep .label, .n-es .label, .n-rs .label { left: 60.500px; }
.root .label { left: 48px; }
.label span { display: flex; gap: 1px; color: #25bd94; padding-top: 3px; }
.root .label span { padding-top: 4px; }
.label svg { width: 12px; height: 12px; }
.kebab { position: absolute; right: 10px; top: 15.500px; display: flex; flex-direction: column; gap: 1.500px; }
.root .kebab { right: 11px; }
.kebab i { width: 4px; height: 4px; border-radius: 50%; background: #16a3b8; }
.fold { position: absolute; right: -10px; top: 18px; width: 10px; height: 12px; background: #fff; font-size: 13px; line-height: 11px; text-align: center; color: #222; }
.tags { position: absolute; right: 2px; bottom: -10px; display: flex; gap: 1px; }
.tags span { height: 15px; border: 1px solid #8fa4b1; border-radius: 4px; background: #ccd6dd; font-size: 9px; line-height: 13px; padding: 0 4px; color: #495763; letter-spacing: -.06px; }
.pods { position: absolute; left: 10px; top: 58px; width: 234px; height: 58px; border-radius: 3px; background: #dee6ed; padding: 8px; }
.pod { position: relative; display: grid; place-items: center; width: 23px; height: 23px; border-radius: 2px; background: #25bd94; }
.fav-star { position: absolute; left: 16px; top: -5px; color: #ffce3a; }

/* Desktop panel */
.panel { height: 41px; background: #1b1b1b; border-top: 1px solid #2a2a2a; display: flex; align-items: center; flex: none; }
.mint { padding-left: 6px; width: 52px; }
.psep { width: 1px; height: 38px; background: #3a3a3a; margin-right: 8px; }
.launch { display: flex; gap: 6px; height: 40px; }
.launch span { width: 38px; height: 40px; padding: 5px; border-bottom: 2px solid transparent; }
.launch svg { width: 28px; height: 28px; }
.launch .run { border-color: #c49a7c; }
.launch .cur { background: #555; }
.prompt { font: 700 9px "DejaVu Sans Mono", monospace; fill: #eee; }
.tray { margin-left: auto; display: flex; align-items: center; }
.t-slack { width: 20px; height: 20px; margin-right: 12px; }
.t-viber { width: 24px; height: 24px; margin-right: 12px; }
.t-bt { width: 12px; height: 16px; margin-right: 13px; }
.t-clip { width: 14px; height: 16px; margin-right: 11px; }
.t-shield { width: 16px; height: 16px; margin-right: 10px; }
.t-tg { width: 16px; height: 16px; margin-right: 13px; }
.t-print { width: 16px; height: 14px; margin-right: 13px; }
.t-eject { width: 14px; height: 16px; margin-right: 15px; }
.t-flag { width: 26px; height: 18px; margin-right: 14px; }
.t-star { width: 16px; height: 15px; color: #dedede; margin-right: 12px; }
.t-wifi { width: 16px; height: 14px; margin-right: 13px; }
.t-music { width: 13px; height: 13px; margin-right: 15px; }
.t-bat { width: 14px; height: 17px; margin-right: 12px; }
.tray time { font: 600 12.600px "Noto Sans", sans-serif; color: #e0e0e0; width: 49px; margin-right: 6px; white-space: nowrap; }
.desk { width: 10px; height: 40px; background: #333; }
```
